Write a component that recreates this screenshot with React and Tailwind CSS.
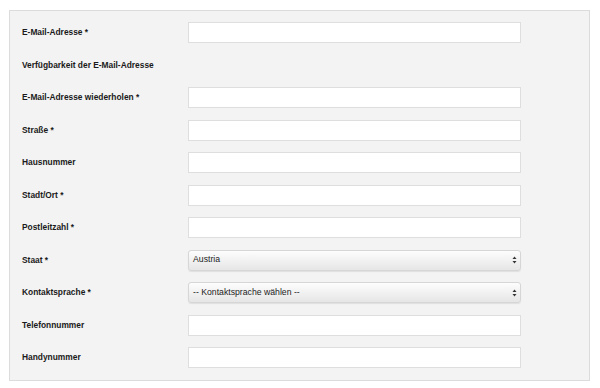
const fields = [
  { label: 'E-Mail-Adresse *', type: 'input' },
  { label: 'Verfügbarkeit der E-Mail-Adresse', type: 'none' },
  { label: 'E-Mail-Adresse wiederholen *', type: 'input' },
  { label: 'Straße *', type: 'input' },
  { label: 'Hausnummer', type: 'input' },
  { label: 'Stadt/Ort *', type: 'input' },
  { label: 'Postleitzahl *', type: 'input' },
  { label: 'Staat *', type: 'select', value: 'Austria' },
  { label: 'Kontaktsprache *', type: 'select', value: '-- Kontaktsprache wählen --' },
  { label: 'Telefonnummer', type: 'input' },
  { label: 'Handynummer', type: 'input' },
];

function SelectBox({ value }) {
  return (
    <div className="flex h-[21px] w-[333px] items-center justify-between rounded-[3px] border border-[#d6d6d6] bg-gradient-to-b from-[#fdfdfd] to-[#e6e6e6] pl-[4px] pr-[3px] text-[8.7px] text-[#222] shadow-[0_1px_1px_rgba(0,0,0,0.08)]">
      <span>{value}</span>
      <svg width="5" height="8" viewBox="0 0 5 8">
        <path d="M2.5 0.5 L4.5 3 L0.5 3 Z" fill="#333" />
        <path d="M2.5 7.5 L4.5 5 L0.5 5 Z" fill="#333" />
      </svg>
    </div>
  );
}

export default function App() {
  return (
    <div className="min-h-screen bg-white pt-[10px] pl-[9px] font-['Liberation_Sans',Arial,sans-serif]">
      <div className="w-[581px] border border-[#dcdcdc] bg-[#f3f3f3] pb-[12px] pt-[11px]">
        <div className="flex flex-col gap-[11.5px]">
          {fields.map((f) => (
            <div key={f.label} className="flex h-[21px] items-center">
              <div className="w-[178px] pl-[12px] text-[8.4px] font-bold text-[#1a1a1a]">{f.label}</div>
              {f.type === 'input' && (
                <div className="h-[21px] w-[333px] border border-[#dedede] bg-white" />
              )}
              {f.type === 'select' && <SelectBox value={f.value} />}
            </div>
          ))}
        </div>
      </div>
    </div>
  );
}
